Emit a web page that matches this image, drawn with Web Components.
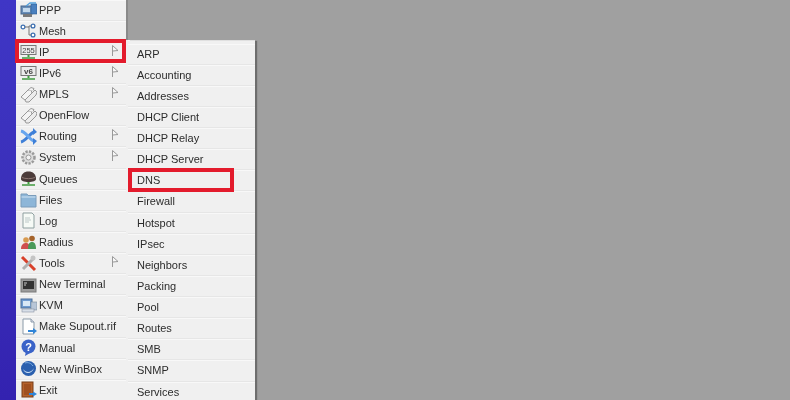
<!DOCTYPE html>
<html>
<head>
<meta charset="utf-8">
<style>
  html, body { margin: 0; height: 100%; overflow: hidden; background: #a0a0a0; }
  body { font-family: "Liberation Sans", Arial, sans-serif; }
</style>
</head>
<body>
<winbox-app></winbox-app>

<script>
const BASE = `<path d="M8.500 12v2" stroke="#3fa03f" stroke-width="2"/><path d="M2 15h13" stroke="#3f9a3f" stroke-width="1.500"/>`;
const ICONS = {
  ppp: `<rect x="1" y="5" width="11" height="8" fill="#6b8fb8" stroke="#44648c"/><rect x="3" y="7" width="7" height="4" fill="#c4d9ec"/><rect x="11" y="3" width="6" height="10" fill="#4a80bf" stroke="#2f5c8e" stroke-width=".6"/><rect x="3" y="13" width="9" height="3" fill="#7a7a7a"/><path d="M6 5l4-3h6" fill="none" stroke="#52a0dc" stroke-width="1.300"/>`,
  mesh: `<circle cx="3" cy="5" r="1.900" fill="#fff" stroke="#3c6fb0" stroke-width="1.300"/><circle cx="13" cy="4" r="1.900" fill="#fff" stroke="#3c6fb0" stroke-width="1.300"/><circle cx="13" cy="13" r="1.900" fill="#fff" stroke="#3c6fb0" stroke-width="1.300"/><path d="M5 5h4M9 4h2M9 4v9h2" fill="none" stroke="#777"/>`,
  ip: `<rect x="1" y="2.500" width="15" height="9" fill="#ececec" stroke="#777"/><text x="8.500" y="10" text-anchor="middle" font-family="Liberation Sans" font-size="7.500" fill="#444">255</text>${BASE}`,
  ipv6: `<rect x="1" y="2.500" width="15" height="9" fill="#ececec" stroke="#777"/><text x="8.500" y="10" text-anchor="middle" font-family="Liberation Sans" font-weight="700" font-size="8" fill="#444">v6</text>${BASE}`,
  tag: `<path d="M1 11l7-7h3l1 3-7 7z" fill="#f4f4f4" stroke="#999"/><path d="M5 14l7-7 3-3 2 2-1 3-7 7h-3z" fill="#ececec" stroke="#999"/><path d="M8 4l3-2.500 3 1-1 2" fill="#f4f4f4" stroke="#999"/>`,
  routing: `<path d="M1 14C6 13 10 5 14 4" fill="none" stroke="#3f80d8" stroke-width="3"/><path d="M1 3C6 4 10 12 14 13" fill="none" stroke="#68a6ee" stroke-width="3"/><path d="M13 0l4 4-4 3zM13 10l4 3-4 4z" fill="#3f80d8"/>`,
  system: `<circle cx="8.500" cy="8.500" r="6" fill="#dcdcdc" stroke="#9a9a9a" stroke-width="2.500" stroke-dasharray="2.200 1.300"/><circle cx="8.500" cy="8.500" r="2.500" fill="#f2f2f2" stroke="#999"/>`,
  queues: `<path d="M1 9C1 4 4 1.500 8.500 1.500S16 4 16 9c0 2-3 3-7.500 3S1 11 1 9z" fill="#4a3a38"/><path d="M2 7.500c3 1.500 10 1.500 13 0" fill="none" stroke="#8b7570"/>${BASE}`,
  files: `<path d="M1 3h6l1 1.500h8V16H1z" fill="#8db6d8" stroke="#7a9cba"/><path d="M1.500 6h14" stroke="#cfe2f2"/>`,
  log: `<path d="M3 1h9l2 2v13H3z" fill="#f6faf6" stroke="#8fa0a0"/><path d="M5 6h5M5 8h6M5 10h4" stroke="#bcc8c8"/>`,
  radius: `<circle cx="6" cy="7" r="2.800" fill="#d89a50"/><circle cx="12" cy="5.500" r="2.800" fill="#a5632a"/><path d="M1 16c0-5 3-6 5-6s4 1 4 6z" fill="#d05050"/><path d="M8 16c0-6 2-7 4-7s4 1 4 7z" fill="#4a9a5a"/>`,
  tools: `<path d="M2 2l13 13" stroke="#d8402a" stroke-width="3"/><path d="M14 3L3 14" stroke="#b0b0b0" stroke-width="3"/><circle cx="13" cy="3" r="2.500" fill="#c4c4c4"/>`,
  terminal: `<rect x="1" y="3" width="15" height="13" fill="#9c9c9c" stroke="#7a7a7a"/><rect x="3" y="5" width="11" height="8" fill="#333"/><path d="M4 7h3M4 9h2" stroke="#ccc"/>`,
  kvm: `<rect x="1" y="2" width="11" height="9" fill="#6f9bd0" stroke="#4c6f9a"/><rect x="3" y="4" width="7" height="5" fill="#d8e8f6"/><rect x="11" y="5" width="6" height="8" fill="#b8c6d8" stroke="#7a8a9a" stroke-width=".6"/><rect x="2" y="12" width="12" height="3" fill="#d8dfe8" stroke="#8a95a5" stroke-width=".6"/>`,
  supout: `<path d="M3 1h8l3 3v12H3z" fill="#fff" stroke="#8a9aa8"/><path d="M11 1v3h3" fill="#dde" stroke="#8a9aa8"/><path d="M8 13h7" stroke="#2f85d8" stroke-width="2"/><path d="M13 10l4 3-4 3z" fill="#2f85d8"/>`,
  manual: `<circle cx="8.500" cy="7.500" r="7" fill="#3a63c8"/><path d="M6 12l-1 5 5-3z" fill="#3a63c8"/><text x="8.500" y="11.500" text-anchor="middle" font-family="Liberation Sans" font-weight="700" font-size="11" fill="#fff">?</text>`,
  winbox: `<circle cx="8.500" cy="8.500" r="7.500" fill="#2a5fae"/><path d="M3 9c3 4 8 4 11-1-2 6-9 7-11 1z" fill="#cfe2f5"/><path d="M5 3c3-1 6 0 8 3" fill="none" stroke="#7fb0e4"/>`,
  exit: `<rect x="2" y="1" width="11" height="15" fill="#b5622c" stroke="#7a3f18"/><rect x="4" y="3" width="7" height="11" fill="#a05020"/><path d="M9 13h6" stroke="#2f85d8" stroke-width="2"/><path d="M13 10.500l4 2.500-4 2.500z" fill="#2f85d8"/>`
};

class MenuRow extends HTMLElement {
  constructor() {
    super();
    this.attachShadow({ mode: 'open' });
  }

  connectedCallback() {
    const icon = this.getAttribute('icon');
    const arrow = this.hasAttribute('arrow');
    this.shadowRoot.innerHTML = `
      <style>
        :host {
          display: flex;
          align-items: center;
          box-sizing: border-box;
          height: 21.125px;
          border-bottom: 1px solid #e6e6e6;
          box-shadow: inset 0 1px 0 #f8f8f8;
          color: #2c2c2c;
          font-size: 11px;
          white-space: nowrap;
        }
        svg.icon { width: 17px; height: 17px; margin: 0 2px 0 4px; flex: none; }
        .label { flex: 1; }
        svg.arrow { width: 7px; height: 11px; margin: 0 7px 3px 0; flex: none; }
      </style>
      ${icon ? `<svg class="icon" viewBox="0 0 17 17">${ICONS[icon]}</svg>` : ''}
      <span class="label"><slot></slot></span>
      ${arrow ? `<svg class="arrow" viewBox="0 0 7 11"><path d="M.5 11V.5L6 5.500 1 6" fill="#f7f7f7" stroke="#999"/></svg>` : ''}
    `;
  }
}

class MainMenu extends HTMLElement {
  constructor() {
    super();
    this.attachShadow({ mode: 'open' });
    this.shadowRoot.innerHTML = `
      <style>
        :host {
          display: block;
          width: 110px;
          height: 420px;
          margin-top: -.500px;
          background: #f0f0f0;
          flex: none;
        }
      </style>
      <slot></slot>
    `;
  }
}

class SubMenu extends HTMLElement {
  constructor() {
    super();
    this.attachShadow({ mode: 'open' });
    this.shadowRoot.innerHTML = `
      <style>
        :host {
          position: absolute;
          left: 128px;
          top: 41px;
          width: 127px;
          height: 380px;
          padding-top: 2.500px;
          background: #f0f0f0;
          box-shadow: 2px 0 1px #6e6e6e, 0 -1px 0 #f8f8f8;
        }
        ::slotted(menu-row) { padding-left: 9px; }
      </style>
      <slot></slot>
    `;
  }
}

class RedMark extends HTMLElement {
  constructor() {
    super();
    this.attachShadow({ mode: 'open' });
    this.shadowRoot.innerHTML = `
      <style>
        :host {
          position: absolute;
          box-sizing: border-box;
          border: 4px solid #e31b2c;
          pointer-events: none;
        }
      </style>
    `;
  }
}

class WinboxApp extends HTMLElement {
  constructor() {
    super();
    this.attachShadow({ mode: 'open' });
    this.shadowRoot.innerHTML = `
      <style>
        :host {
          display: flex;
          position: relative;
          width: 790px;
          height: 400px;
          overflow: hidden;
          background: #a0a0a0;
          filter: blur(.3px);
        }
        .stripe {
          width: 16px;
          flex: none;
          background: linear-gradient(#3f36c6, #3a2fb8 55%, #3322b0);
        }
        .edge {
          width: 2px;
          flex: none;
          background: linear-gradient(#8a8a8a 40px, #f0f0f0 40px);
        }
      </style>
      <div class="stripe"></div>
      <main-menu>
        <menu-row icon="ppp">PPP</menu-row>
        <menu-row icon="mesh">Mesh</menu-row>
        <menu-row icon="ip" arrow>IP</menu-row>
        <menu-row icon="ipv6" arrow>IPv6</menu-row>
        <menu-row icon="tag" arrow>MPLS</menu-row>
        <menu-row icon="tag">OpenFlow</menu-row>
        <menu-row icon="routing" arrow>Routing</menu-row>
        <menu-row icon="system" arrow>System</menu-row>
        <menu-row icon="queues">Queues</menu-row>
        <menu-row icon="files">Files</menu-row>
        <menu-row icon="log">Log</menu-row>
        <menu-row icon="radius">Radius</menu-row>
        <menu-row icon="tools" arrow>Tools</menu-row>
        <menu-row icon="terminal">New Terminal</menu-row>
        <menu-row icon="kvm">KVM</menu-row>
        <menu-row icon="supout">Make Supout.rif</menu-row>
        <menu-row icon="manual">Manual</menu-row>
        <menu-row icon="winbox">New WinBox</menu-row>
        <menu-row icon="exit">Exit</menu-row>
      </main-menu>
      <div class="edge"></div>
      <sub-menu>
        <menu-row>ARP</menu-row>
        <menu-row>Accounting</menu-row>
        <menu-row>Addresses</menu-row>
        <menu-row>DHCP Client</menu-row>
        <menu-row>DHCP Relay</menu-row>
        <menu-row>DHCP Server</menu-row>
        <menu-row>DNS</menu-row>
        <menu-row>Firewall</menu-row>
        <menu-row>Hotspot</menu-row>
        <menu-row>IPsec</menu-row>
        <menu-row>Neighbors</menu-row>
        <menu-row>Packing</menu-row>
        <menu-row>Pool</menu-row>
        <menu-row>Routes</menu-row>
        <menu-row>SMB</menu-row>
        <menu-row>SNMP</menu-row>
        <menu-row>Services</menu-row>
      </sub-menu>
      <red-mark style="left:15px;top:39px;width:111px;height:24px"></red-mark>
      <red-mark style="left:128px;top:168px;width:106px;height:24px"></red-mark>
    `;
  }
}

customElements.define('menu-row', MenuRow);
customElements.define('main-menu', MainMenu);
customElements.define('sub-menu', SubMenu);
customElements.define('red-mark', RedMark);
customElements.define('winbox-app', WinboxApp);
</script>
</body>
</html>
